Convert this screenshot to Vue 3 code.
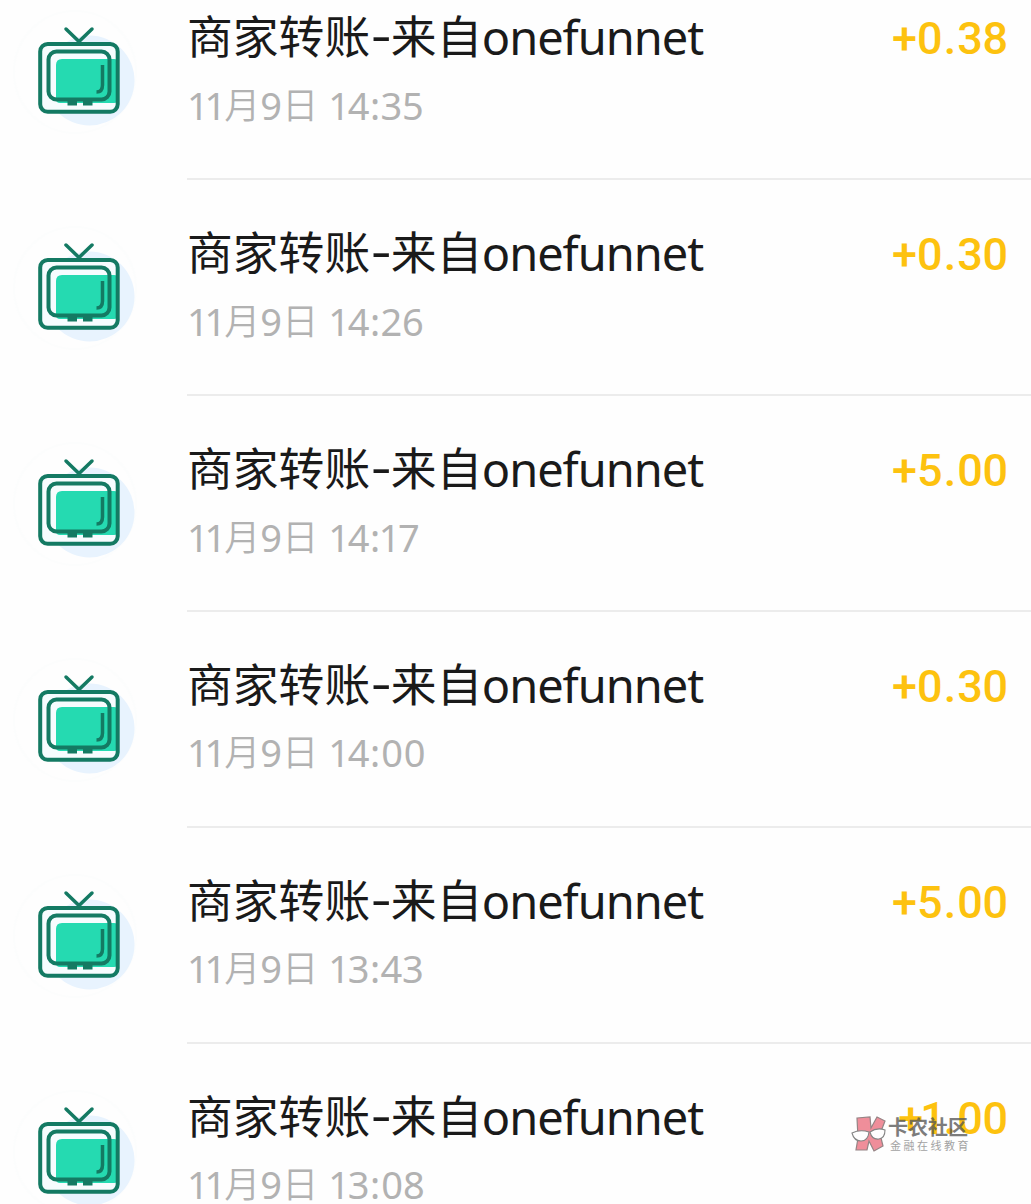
<script setup>
const records = [
  { time: '14:35', amount: '+0.38' },
  { time: '14:26', amount: '+0.30' },
  { time: '14:17', amount: '+5.00' },
  { time: '14:00', amount: '+0.30' },
  { time: '13:43', amount: '+5.00' },
  { time: '13:08', amount: '+1.00' },
]
const glyphClass = (c) => (c === '1' ? 'one' : c === ':' ? 'colon' : c === '0' ? 'zero' : '')
</script>

<template>
  <main class="page">
    <ul class="list">
      <li v-for="r in records" :key="r.time" class="row">
        <svg class="icon" viewBox="0 0 187 216" width="187" height="216">
          <circle cx="75" cy="108" r="61" fill="none" stroke="#fcfdfd" stroke-width="2" />
          <circle cx="89.500" cy="116.500" r="45" fill="#e8f3fe" />
          <rect x="40" y="79.500" width="78" height="68" rx="8" fill="#f6fcfe" />
          <path d="M62 95H114Q118 95 118 99V135Q118 139 114 139H60Q56 139 56 135V101Q56 95 62 95Z" fill="#25dab1" />
          <g fill="none" stroke="#147a63" stroke-width="4">
            <rect x="40.200" y="80" width="77.500" height="67.800" rx="7.500" />
            <rect x="48.500" y="87.500" width="61" height="48" rx="8" />
            <path d="M66 65L79 77.500L92 65" stroke-width="3.500" stroke-linecap="round" />
            <path d="M102.500 101V121Q102.500 128 96.500 128" stroke-width="3.500" />
          </g>
          <path d="M67.500 136H77V141.500H67.500ZM83 136H92.500V141.500H83Z" fill="#147a63" />
        </svg>
        <div class="body">
          <div class="info">
            <div class="title"><span class="han">商家转账</span><span class="dash">-</span><span class="han">来自</span><span class="latin">onefunnet</span></div>
            <div class="date"><span class="one">1</span><span class="one">1</span><span class="cjk">月</span><span>9</span><span class="cjk day">日</span><span v-for="(c, i) in r.time" :key="i" :class="glyphClass(c)">{{ c }}</span></div>
          </div>
          <div class="amount"><span v-for="(c, i) in r.amount" :key="i" :class="{ dot: c === '.', slim: c === '1' }">{{ c }}</span></div>
        </div>
      </li>
    </ul>
    <div class="watermark">
      <svg width="36" height="38" viewBox="0 0 36 38">
        <path d="M6 2L19 1L20 12L26 1L34 5L29 18L32 30L23 35L18 25L16 34L5 34L7 22Z" fill="#ee8290" stroke="#8a7778" stroke-width="1.200" />
        <g fill="#fff" stroke="#777" stroke-width="1.100">
          <path d="M1 17Q9 13 18 16Q17 25 10 25Q3 25 1 17Z" />
          <path d="M19 16Q26 11 34 14Q34 22 28 23Q21 24 19 16Z" />
        </g>
      </svg>
      <div class="brand"><div class="name">卡农社区</div><div class="sub">金融在线教育</div></div>
    </div>
  </main>
</template>

<style>
body { margin: 0; background: #fff; }
</style>
<style scoped>
.page { position: relative; width: 1031px; height: 1204px; overflow: hidden; background: #fefefe; }
.list { list-style: none; margin: -36px 0 0; padding: 0; }
.row { display: flex; height: 216px; }
.icon { flex: none; display: block; }
.body { flex: 1; box-sizing: border-box; display: flex; justify-content: space-between; border-bottom: 2px solid #ececec; padding-right: 23px; }
.info { padding-top: 41px; white-space: nowrap; }
.title { height: 60px; display: flex; align-items: baseline; line-height: 60px; color: #1a1a1a; font-family: "Noto Sans", "Noto Sans CJK SC", sans-serif; font-size: 47px; }
.han { font-family: "Noto Sans CJK SC", sans-serif; font-size: 45.800px; transform: translateY(-1px); }
.dash { width: 20.500px; text-align: center; transform: translate(1px, -3px) scaleX(1.35); }
.latin { letter-spacing: -1.050px; margin-left: -.500px; }
.date { height: 48px; margin-top: 15px; padding-left: 2px; display: flex; align-items: baseline; line-height: 48px; color: #b2b2b2; font-family: "Noto Sans", "Noto Sans CJK SC", sans-serif; font-size: 38px; }
.row:nth-child(n+4) .date { margin-top: 14px; }
.date span { width: 21.400px; display: flex; justify-content: center; }
.date .one { width: 17.500px; }
.date .colon { width: 11.500px; }
.date .zero { width: 22.500px; }
.date .cjk { width: 36.500px; font-family: "Noto Sans CJK SC", sans-serif; font-size: 36px; font-weight: 350; transform: translateY(-1px); }
.date .day { margin-right: 12px; }
.amount { display: flex; padding-top: 45px; line-height: 60px; color: #fdc20f; font-family: Roboto, sans-serif; font-size: 45px; font-weight: 500; }
.amount span { width: 25.300px; display: flex; justify-content: center; }
.amount .dot { width: 15px; }
.amount .slim { width: 19px; }
.watermark { position: absolute; left: 851px; top: 1116px; display: flex; opacity: .9; }
.brand { margin-left: 1px; white-space: nowrap; font-family: "Noto Sans CJK SC", sans-serif; }
.name { color: #555; opacity: .85; font-size: 20px; line-height: 22px; font-weight: 700; }
.sub { margin: 1px 0 0 2px; color: #999; font-size: 11px; line-height: 12px; letter-spacing: 2.500px; }
</style>
